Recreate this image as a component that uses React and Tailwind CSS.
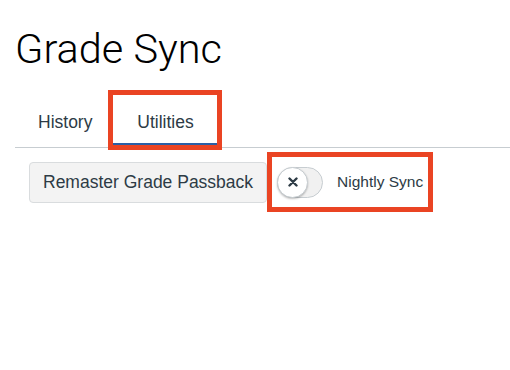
function Toggle() {
  return (
    <div className="relative w-[46px] h-[31px] rounded-full bg-[#f1f1f1] border border-[#c7cdd1] shrink-0">
      {/* Knob */}
      <div className="absolute left-[-1px] top-[-1px] w-[31px] h-[31px] rounded-full bg-white border border-[#c7cdd1] shadow-[0_1px_2px_rgba(0,0,0,0.25)] flex items-center justify-center">
        <svg width="10" height="10" viewBox="0 0 10 10">
          <path d="M1.5 1.5 L8.5 8.5 M8.5 1.5 L1.5 8.5" stroke="#2d3b45" strokeWidth="2.4" strokeLinecap="round" />
        </svg>
      </div>
    </div>
  );
}

export default function App() {
  return (
    <div className="w-[510px] h-[370px] bg-white font-['Liberation_Sans',Arial,sans-serif] text-[#2d3b45] overflow-hidden">

      {/* Title */}
      <h1 className="mt-[26px] ml-[15px] h-[45px] text-[41.5px] leading-[45px] font-light text-black font-['Roboto',sans-serif]">
        Grade Sync
      </h1>

      {/* Tabs */}
      <div className="mt-[19px] ml-[15px] flex items-end border-b border-[#c7cdd1]">
        <div className="ml-[8px] mb-[2px] pl-[15px] pr-[16px] pt-[15px] pb-[9px] text-[17.5px] leading-[24px] border-b-2 border-transparent">
          History
        </div>
        <div className="mb-[-3px] border-[5px] border-[#ea4423]">
          <div className="w-[104px] pt-[15px] pb-[9px] text-center text-[17.5px] leading-[24px] border-b-2 border-[#2a5fa6]">
            Utilities
          </div>
        </div>
      </div>

      {/* Actions */}
      <div className="mt-[4px] pl-[29px] flex items-center">
        <button className="h-[41px] shrink-0 whitespace-nowrap px-[13px] flex items-center rounded-[4px] bg-[#f3f3f3] border border-[#d9dcde] text-[17.5px] text-[#2d3b45]">
          Remaster Grade Passback
        </button>
        <div className="h-[60px] shrink-0 border-[5px] border-[#ea4423] flex items-center pl-[5px] pr-[5px] gap-[14px]">
          <Toggle />
          <span className="text-[15.5px] leading-[20px] whitespace-nowrap">Nightly Sync</span>
        </div>
      </div>

    </div>
  );
}
